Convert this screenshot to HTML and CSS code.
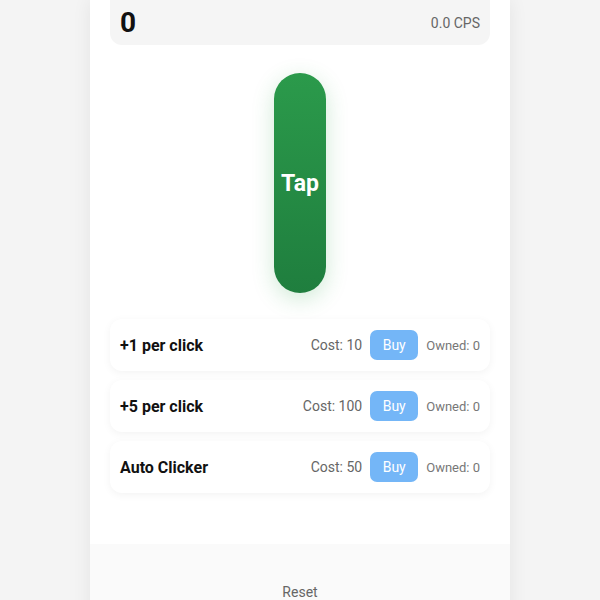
FILE: index.html
```html
<!DOCTYPE html>
<html>
<head>
<meta charset="utf-8">
<link rel="stylesheet" href="styles.css">
</head>
<body>
<div class="app">
  <div class="header">
    <div class="score">0</div>
    <div class="cps">0.0 CPS</div>
  </div>
  <div class="tap-area">
    <button class="tap">Tap</button>
  </div>
  <div class="shop">
    <div class="item">
      <div class="name">+1 per click</div>
      <div class="meta">
        <span class="cost">Cost: 10</span>
        <button class="buy">Buy</button>
        <span class="owned">Owned: 0</span>
      </div>
    </div>
    <div class="item">
      <div class="name">+5 per click</div>
      <div class="meta">
        <span class="cost">Cost: 100</span>
        <button class="buy">Buy</button>
        <span class="owned">Owned: 0</span>
      </div>
    </div>
    <div class="item">
      <div class="name">Auto Clicker</div>
      <div class="meta">
        <span class="cost">Cost: 50</span>
        <button class="buy">Buy</button>
        <span class="owned">Owned: 0</span>
      </div>
    </div>
  </div>
  <div class="footer">
    <span class="reset">Reset</span>
  </div>
</div>
</body>
</html>
```
FILE: styles.css
```css
* { box-sizing: border-box; }
html, body { margin: 0; padding: 0; }
body {
  background: #f4f4f4;
  font-family: Roboto, "Liberation Sans", sans-serif;
  color: #111;
  height: 600px;
  overflow: hidden;
}
.app {
  width: 420px;
  margin: 0 auto;
  background: #fff;
  box-shadow: 0 0 18px rgba(0,0,0,0.07);
  min-height: 640px;
  display: flex;
  flex-direction: column;
}
.header {
  margin: 0 20px;
  height: 45px;
  background: #f5f5f5;
  border-radius: 0 0 12px 12px;
  display: flex;
  align-items: center;
  justify-content: space-between;
  padding: 0 10px 0 10px;
}
.score {
  font-size: 28px;
  font-weight: 700;
  color: #111;
  line-height: 1;
}
.cps {
  font-size: 14px;
  color: #666;
}
.tap-area {
  display: flex;
  justify-content: center;
  padding: 28px 0 26px;
}
.tap {
  width: 52px;
  height: 220px;
  border: none;
  border-radius: 26px;
  background: linear-gradient(180deg, #2b9a4b 0%, #1f7e3e 100%);
  color: #fff;
  font-family: Roboto, "Liberation Sans", sans-serif;
  font-size: 23px;
  font-weight: 700;
  padding: 0;
  box-shadow: 0 6px 22px rgba(40,160,70,0.22);
}
.shop {
  margin: 0 20px;
  display: flex;
  flex-direction: column;
  gap: 9px;
}
.item {
  height: 52px;
  background: #fff;
  border-radius: 12px;
  box-shadow: 0 2px 8px rgba(0,0,0,0.05);
  display: flex;
  align-items: center;
  justify-content: space-between;
  padding: 0 10px;
}
.name {
  font-size: 16px;
  font-weight: 700;
  color: #111;
}
.meta {
  display: flex;
  align-items: center;
  gap: 8px;
}
.cost {
  font-size: 14px;
  color: #666;
}
.buy {
  width: 48px;
  height: 30px;
  border: none;
  border-radius: 7px;
  background: #74b6f7;
  color: #fff;
  font-family: Roboto, "Liberation Sans", sans-serif;
  font-size: 14px;
  padding: 0;
}
.owned {
  font-size: 13px;
  color: #777;
}
.footer {
  margin-top: 51px;
  background: #fafafa;
  flex: 1;
  display: flex;
  justify-content: center;
  padding-top: 40px;
}
.reset {
  font-size: 14px;
  color: #666;
}
```
